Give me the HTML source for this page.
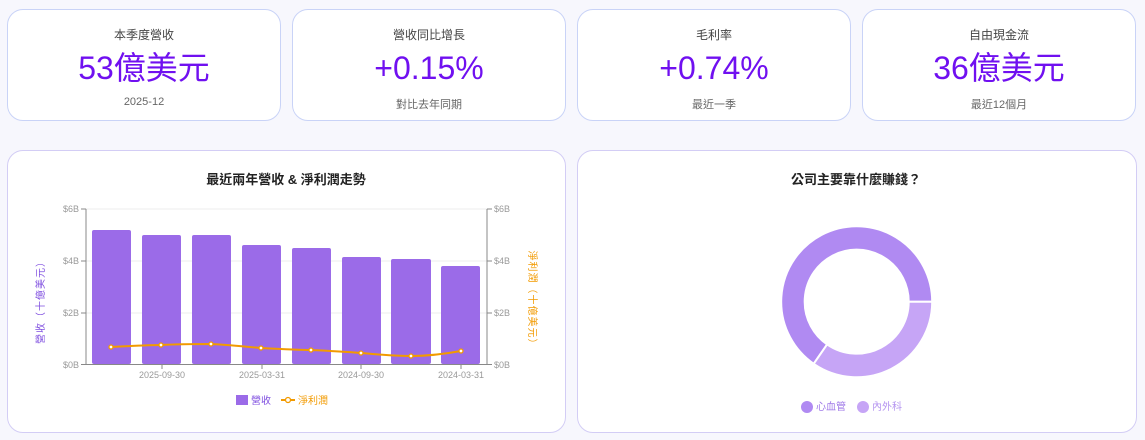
<!DOCTYPE html>
<html><head><meta charset="utf-8"><style>
*{margin:0;padding:0;box-sizing:border-box}
body{width:1145px;height:440px;background:#f7f7fd;font-family:"Liberation Sans","Noto Sans CJK TC",sans-serif;position:relative;overflow:hidden}
.card{position:absolute;background:#fff;border:1px solid #c9d3f7;border-radius:16px;text-align:center}
.t{position:absolute;left:0;right:0;top:16px;font-size:12px;color:#444}
.v{position:absolute;left:0;right:0;top:38px;font-size:32px;color:#7010f0;line-height:40px}
.s{position:absolute;left:0;right:0;top:86px;font-size:11px;color:#666}
.big{border-color:#d3cdf5}
</style></head><body>
<div class="card" style="left:7px;top:9px;width:274px;height:112px"><div class="t">本季度營收</div><div class="v">53億美元</div><div class="s">2025-12</div></div>
<div class="card" style="left:292px;top:9px;width:274px;height:112px"><div class="t">營收同比增長</div><div class="v">+0.15%</div><div class="s">對比去年同期</div></div>
<div class="card" style="left:577px;top:9px;width:274px;height:112px"><div class="t">毛利率</div><div class="v">+0.74%</div><div class="s">最近一季</div></div>
<div class="card" style="left:862px;top:9px;width:274px;height:112px"><div class="t">自由現金流</div><div class="v">36億美元</div><div class="s">最近12個月</div></div>

<div class="card big" style="left:7px;top:150px;width:559px;height:283px"></div>
<div class="card big" style="left:577px;top:150px;width:560px;height:283px"></div>

<svg width="1145" height="440" style="position:absolute;left:0;top:0" font-family="Liberation Sans, Noto Sans CJK TC, sans-serif">
<text x="286" y="184" text-anchor="middle" font-size="13" font-weight="bold" fill="#222">最近兩年營收 &amp; 淨利潤走勢</text>
<g stroke="#eee" stroke-width="1">
<line x1="86" y1="209" x2="487" y2="209"/><line x1="86" y1="261" x2="487" y2="261"/><line x1="86" y1="313" x2="487" y2="313"/>
</g>
<g fill="#9b6be8">
<rect x="92" y="230" width="39" height="134" rx="2"/>
<rect x="142" y="235" width="39" height="129" rx="2"/>
<rect x="192" y="235" width="39" height="129" rx="2"/>
<rect x="242" y="245" width="39" height="119" rx="2"/>
<rect x="292" y="248" width="39" height="116" rx="2"/>
<rect x="342" y="257" width="39" height="107" rx="2"/>
<rect x="391" y="259" width="40" height="105" rx="2"/>
<rect x="441" y="266" width="39" height="98" rx="2"/>
</g>
<g stroke="#888" stroke-width="1" fill="none">
<line x1="86" y1="209" x2="86" y2="365"/><line x1="487" y1="209" x2="487" y2="365"/>
<line x1="81" y1="364.5" x2="492" y2="364.5"/>
<line x1="81" y1="209" x2="86" y2="209"/><line x1="81" y1="261" x2="86" y2="261"/><line x1="81" y1="313" x2="86" y2="313"/>
<line x1="487" y1="209" x2="492" y2="209"/><line x1="487" y1="261" x2="492" y2="261"/><line x1="487" y1="313" x2="492" y2="313"/>
<line x1="162" y1="364" x2="162" y2="369"/><line x1="262" y1="364" x2="262" y2="369"/><line x1="361" y1="364" x2="361" y2="369"/><line x1="461" y1="364" x2="461" y2="369"/>
</g>
<g font-size="9" fill="#999">
<text x="79" y="212" text-anchor="end">$6B</text><text x="79" y="264" text-anchor="end">$4B</text><text x="79" y="316" text-anchor="end">$2B</text><text x="79" y="368" text-anchor="end">$0B</text>
<text x="494" y="212">$6B</text><text x="494" y="264">$4B</text><text x="494" y="316">$2B</text><text x="494" y="368">$0B</text>
<text x="162" y="378" text-anchor="middle">2025-09-30</text><text x="262" y="378" text-anchor="middle">2025-03-31</text><text x="361" y="378" text-anchor="middle">2024-09-30</text><text x="461" y="378" text-anchor="middle">2024-03-31</text>
</g>
<text transform="translate(44,300) rotate(-90)" font-size="10" fill="#8050e0" text-anchor="middle" letter-spacing="1">營收（十億美元）</text>
<text transform="translate(529,300) rotate(90)" font-size="10" fill="#f29a00" text-anchor="middle" letter-spacing="1">淨利潤（十億美元）</text>
<path d="M111 347 C130 346,150 345,161 345 C180 344,200 344,211 344 C230 345,250 347,261 348 C280 349,300 350,311 350 C330 351,350 352,361 353 C375 354,390 356,411 356 C430 356,450 353,461 351" stroke="#f29a00" stroke-width="2" fill="none"/>
<g fill="#fff" stroke="#f29a00" stroke-width="1.3">
<circle cx="111" cy="347" r="2"/><circle cx="161" cy="345" r="2"/><circle cx="211" cy="344" r="2"/><circle cx="261" cy="348" r="2"/><circle cx="311" cy="350" r="2"/><circle cx="361" cy="353" r="2"/><circle cx="411" cy="356" r="2"/><circle cx="461" cy="351" r="2"/>
</g>
<rect x="236" y="395" width="12" height="10" fill="#9b6be8"/>
<text x="251" y="404" font-size="10" fill="#8050e0">營收</text>
<line x1="281" y1="400" x2="295" y2="400" stroke="#f29a00" stroke-width="2"/><circle cx="288" cy="400" r="2.5" fill="#fff" stroke="#f29a00" stroke-width="1.3"/>
<text x="298" y="404" font-size="10" fill="#f29a00">淨利潤</text>

<text x="856" y="184" text-anchor="middle" font-size="13" font-weight="bold" fill="#222">公司主要靠什麼賺錢？</text>
<path d="M932.2 301.7 A75.5 75.5 0 1 0 813.7 363.8 L827.1 344.4 A52 52 0 1 1 908.7 301.7 Z" fill="#b08af2" stroke="#fff" stroke-width="2"/>
<path d="M932.2 301.7 A75.5 75.5 0 0 1 813.7 363.8 L827.1 344.4 A52 52 0 0 0 908.7 301.7 Z" fill="#c6a5f6" stroke="#fff" stroke-width="2"/>
<circle cx="807" cy="407" r="6" fill="#b08af2"/><text x="816" y="410" font-size="10" fill="#a07ae8">心血管</text>
<circle cx="863" cy="407" r="6" fill="#c6a5f6"/><text x="872" y="410" font-size="10" fill="#b595f0">內外科</text>
</svg>
</body></html>
